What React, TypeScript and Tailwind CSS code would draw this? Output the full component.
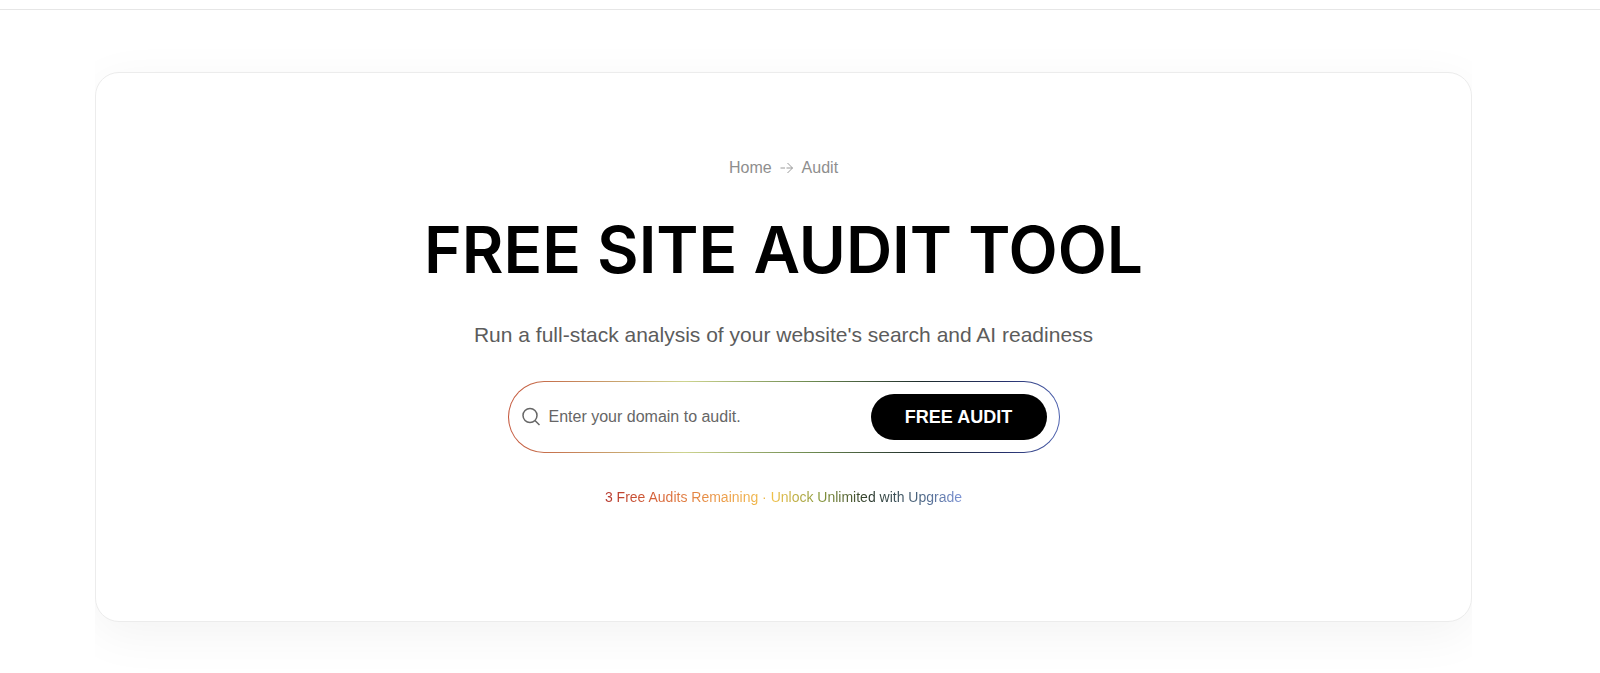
import { useState } from 'react';

const Breadcrumb = () => (
  <nav aria-label="Breadcrumb" className="flex items-center gap-2 text-base leading-6 text-[#8e8e8e]">
    <a href="#home">Home</a>
    <svg width="14" height="14" viewBox="0 0 14 14" fill="none" stroke="currentColor" strokeWidth="0.9" aria-hidden="true">
      <path d="M0.5 7h4.5M6.5 7h6M7.5 2L12.5 7l-5 5" />
    </svg>
    <a href="#audit">Audit</a>
  </nav>
);

const AuditForm = () => {
  const [domain, setDomain] = useState('');

  return (
    <form
      onSubmit={(e) => e.preventDefault()}
      className="mt-8 w-full max-w-[552px] rounded-full bg-[linear-gradient(90deg,#c4553a_0%,#cdd48f_32%,#6d8a50_55%,#1d2b2b_75%,#26306b_90%,#4a5fae_100%)] p-px"
    >
      <div className="flex items-center rounded-full bg-white p-3">
        <label htmlFor="domain" className="shrink-0 text-[#666]">
          <svg width="20" height="20" viewBox="0 0 20 20" fill="none" stroke="currentColor" strokeWidth="1.5" aria-hidden="true">
            <title>Domain</title>
            <circle cx="9" cy="8.5" r="7" />
            <path d="M14 13.5L18.5 18" />
          </svg>
        </label>
        <input
          id="domain"
          type="text"
          value={domain}
          onChange={(e) => setDomain(e.target.value)}
          placeholder="Enter your domain to audit."
          className="h-10 min-w-0 flex-1 bg-transparent px-2 text-base text-[#333] outline-none placeholder:text-[#666]"
        />
        <button type="submit" className="h-[46px] w-44 rounded-full bg-black text-lg font-bold text-white">
          FREE AUDIT
        </button>
      </div>
    </form>
  );
};

const App = () => {
  return (
    <div className="min-h-screen overflow-hidden bg-white font-['Liberation_Sans',Arial,sans-serif]">
      <header className="h-[10px] border-b border-[#e6e6e6]" />
      <main className="mr-32 ml-[95px] overflow-x-clip pt-[62px] pb-[50px]">
        <section className="flex flex-col items-center rounded-3xl border border-[#ececec] bg-white px-6 pt-[83px] pb-28 shadow-[0_12px_50px_rgba(0,0,0,0.05)]">
          <Breadcrumb />
          <h1 className="mt-8 text-center font-['Inter',sans-serif] text-[64px] leading-[76px] font-semibold text-black">
            FREE SITE AUDIT TOOL
          </h1>
          <p className="mt-8 text-center text-[21px] leading-[29px] text-[#5c5c5c]">
            Run a full-stack analysis of your website's search and AI readiness
          </p>
          <AuditForm />
          <p className="mt-8 bg-[linear-gradient(90deg,#b5352b_0%,#d9683a_16%,#eda04a_34%,#f0c048_47%,#8a9a3c_60%,#2c3a2c_74%,#4a6480_88%,#7c93d6_100%)] bg-clip-text text-sm leading-6 text-transparent">
            3 Free Audits Remaining · Unlock Unlimited with Upgrade
          </p>
        </section>
      </main>
    </div>
  );
};

export default App;
